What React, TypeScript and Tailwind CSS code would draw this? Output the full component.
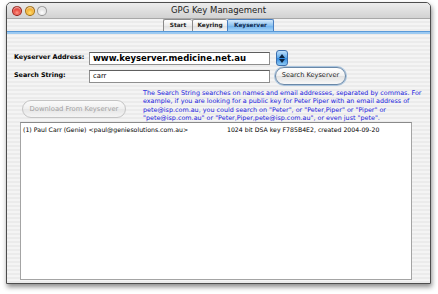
function Light({ color }: { color: string }) {
  return (
    <div
      className={`w-[10px] h-[10px] rounded-full border border-[#0000004d] shadow-[inset_0_1px_2px_rgba(255,255,255,0.8)] ${color}`}
    />
  );
}

function Tab({ label, width, active }: { label: string; width: string; active?: boolean }) {
  return (
    <div
      className={
        active
          ? `${width} h-[12px] flex items-center justify-center border border-b-0 border-[#4a7fc0] rounded-t-[2px] bg-[linear-gradient(#d4e9fb,#8cc2f0_50%,#6db0ec_51%,#a6d4f8)] text-[5.8px] font-bold text-[#0f2a50]`
          : `${width} h-[12px] flex items-center justify-center border border-b-0 border-r-0 border-[#8a8a8a] rounded-t-[2px] bg-[linear-gradient(#ffffff,#ececec_50%,#dedede_51%,#f4f4f4)] text-[5.8px] font-bold text-[#222]`
      }
    >
      {label}
    </div>
  );
}

export default function App() {
  return (
    <div className="w-[438px] h-[294px] bg-white overflow-hidden font-['DejaVu_Sans',sans-serif] text-black">
      <div className="ml-[6px] mt-[2px] w-[425px] h-[282px] flex flex-col border border-[#4d4d4d] rounded-t-[5px] shadow-[1px_3px_5px_rgba(0,0,0,0.45)] bg-[repeating-linear-gradient(180deg,#f4f4f4_0px,#f4f4f4_2px,#ebebeb_2px,#ebebeb_4px)] overflow-hidden">
        {/* title bar */}
        <div className="h-[16px] shrink-0 flex items-center relative bg-[linear-gradient(#ececec,#d2d2d2)] border-b border-[#a8a8a8] rounded-t-[4px]">
          <div className="flex gap-[2.5px] pl-[5px]">
            <Light color="bg-[radial-gradient(circle_at_50%_70%,#ff9a8a,#e0281e_60%,#a01008)]" />
            <Light color="bg-[radial-gradient(circle_at_50%_70%,#ffe07a,#f0a010_60%,#b86a00)]" />
            <Light color="bg-[radial-gradient(circle_at_50%_70%,#ffffff,#dcdcdc_60%,#b8b8b8)]" />
          </div>
          <div className="absolute inset-0 flex items-center justify-center text-[8.5px] text-[#222]">
            GPG Key Management
          </div>
        </div>

        {/* tabs */}
        <div className="h-[12px] shrink-0 flex justify-center items-end">
          <Tab label="Start" width="w-[29px]" />
          <Tab label="Keyring" width="w-[35px]" />
          <Tab label="Keyserver" width="w-[47px]" active />
        </div>
        <div className="h-[3px] shrink-0 border-t border-[#5a9ad8] bg-[#9ccaf2]" />

        {/* content */}
        <div className="flex-1 flex flex-col pl-[7px]">
          <div className="mt-[16px] h-[16px] flex items-center">
            <div className="w-[75px] text-[6.4px] font-bold">Keyserver Address:</div>
            <div className="w-[181px] h-[13px] bg-white border border-[#8e8e8e] border-t-[#5e5e5e] flex items-center pl-[3px] text-[8.5px] font-bold whitespace-nowrap overflow-hidden">
              www.keyserver.medicine.net.au
            </div>
            <div className="ml-[6px] w-[12px] h-[16px] rounded-[3px] border border-[#3c6fae] bg-[linear-gradient(#bfe0fb,#5aa6ea_50%,#2f86dc_51%,#8ccaf6)] flex flex-col items-center justify-center gap-[1px]">
              <svg width="6" height="4" viewBox="0 0 6 4">
                <path d="M0 4 L3 0 L6 4 Z" fill="#0b2340" />
              </svg>
              <svg width="6" height="4" viewBox="0 0 6 4">
                <path d="M0 0 L3 4 L6 0 Z" fill="#0b2340" />
              </svg>
            </div>
          </div>

          <div className="mt-[1px] h-[18px] flex items-center">
            <div className="w-[75px] text-[6.4px] font-bold">Search String:</div>
            <div className="w-[181px] h-[13px] bg-white border border-[#8e8e8e] border-t-[#5e5e5e] flex items-center pl-[3px] text-[6.8px]">
              carr
            </div>
            <div className="ml-[5px] w-[71px] h-[18px] rounded-full border-[1.5px] border-[#6a88a8] shadow-[0_0_0_1px_#a9c4de] bg-[linear-gradient(#ffffff,#f0f0f0_50%,#e2e2e2_51%,#f8f8f8)] flex items-center justify-center text-[6.6px] text-[#222]">
              Search Keyserver
            </div>
          </div>

          <div className="mt-[4px] h-[33px] flex">
            <div className="w-[129px] shrink-0">
              <div className="ml-[8px] mt-[11px] w-[104px] h-[18px] rounded-full border border-[#c4c4c4] bg-[linear-gradient(#fafafa,#efefef_50%,#e6e6e6_51%,#f4f4f4)] flex items-center justify-center text-[6.8px] text-[#a2a2a2]">
                Download From Keyserver
              </div>
            </div>
            <div className="text-[6.4px] leading-[8.3px] text-[#1c1ce0] whitespace-nowrap">
              The Search String searches on names and email addresses, separated by commas. For
              <br />
              example, if you are looking for a public key for Peter Piper with an email address of
              <br />
              pete@isp.com.au, you could search on "Peter", or "Peter,Piper" or "Piper" or
              <br />
              "pete@isp.com.au" or "Peter,Piper,pete@isp.com.au", or even just "pete".
            </div>
          </div>

          <div className="ml-[6px] w-[392px] h-[158px] bg-white border border-[#a4a4a4] border-t-[#8a8a8a]">
            <div className="flex pl-[2px] pt-[2px] text-[6.2px] whitespace-nowrap">
              <div className="w-[204px]">(1) Paul Carr (Genie) &lt;paul@geniesolutions.com.au&gt;</div>
              <div>1024 bit DSA key F785B4E2, created 2004-09-20</div>
            </div>
          </div>
        </div>
      </div>
    </div>
  );
}
